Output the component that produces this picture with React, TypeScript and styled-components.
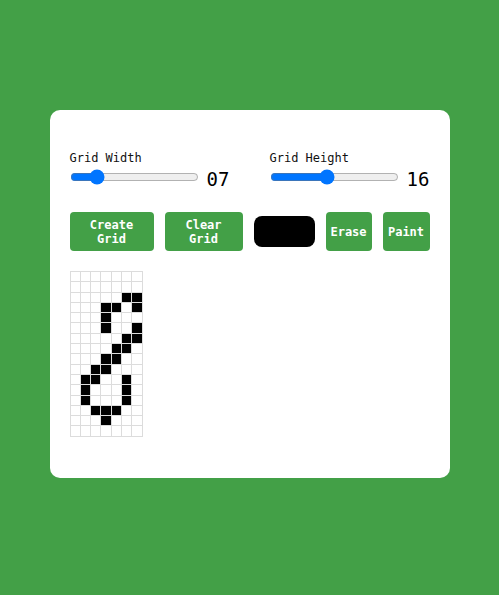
import React from 'react';
import styled, { createGlobalStyle } from 'styled-components';

const GREEN = '#43a047';
const MONO = '"DejaVu Sans Mono", "Liberation Mono", monospace';

const painted: number[][] = [
  [],
  [],
  [5, 6],
  [3, 4, 6],
  [3],
  [3, 6],
  [5, 6],
  [4, 5],
  [3, 4],
  [2, 3],
  [1, 2, 5],
  [1, 5],
  [1, 5],
  [2, 3, 4],
  [3],
  [],
];

const App = () => {
  return (
    <Page>
      <GlobalStyle />
      <Card>
        <Controls>
          <SliderGroup>
            <Label>Grid Width</Label>
            <SliderRow>
              <Slider type="range" min={1} max={35} defaultValue={7} readOnly />
              <Value>07</Value>
            </SliderRow>
          </SliderGroup>
          <SliderGroup>
            <Label>Grid Height</Label>
            <SliderRow>
              <Slider type="range" min={1} max={35} defaultValue={16} readOnly />
              <Value>16</Value>
            </SliderRow>
          </SliderGroup>
        </Controls>
        <Toolbar>
          <Button $width={84}>Create Grid</Button>
          <Button $width={78}>Clear Grid</Button>
          <ColorSwatch />
          <Button $width={46}>Erase</Button>
          <Button $width={47}>Paint</Button>
        </Toolbar>
        <PixelGrid>
          {painted.map((row, r) =>
            Array.from({ length: 7 }, (_, c) => (
              <Cell key={`${r}-${c}`} $filled={row.includes(c)} />
            ))
          )}
        </PixelGrid>
      </Card>
    </Page>
  );
};

export default App;

const GlobalStyle = createGlobalStyle`
  body {
    margin: 0;
    background: ${GREEN};
    font-family: ${MONO};
  }
`;

const Page = styled.main`
  display: flex;
  justify-content: center;
  padding-top: 110px;
`;

const Card = styled.section`
  width: 400px;
  box-sizing: border-box;
  background: #fff;
  border-radius: 10px;
  padding: 40px 20px 41px;
  display: flex;
  flex-direction: column;
`;

const Controls = styled.div`
  display: flex;
  gap: 40px;
`;

const SliderGroup = styled.div`
  display: flex;
  flex-direction: column;
  width: 160px;
`;

const Label = styled.label`
  font-size: 12px;
  line-height: 14px;
  color: #111;
  margin-top: 1px;
`;

const SliderRow = styled.div`
  display: flex;
  align-items: center;
  height: 24px;
`;

const Slider = styled.input`
  width: 129px;
  margin: 0;
`;

const Value = styled.span`
  font-size: 19px;
  line-height: 22px;
  margin-left: 8px;
  margin-top: 3px;
  color: #000;
`;

const Toolbar = styled.div`
  display: flex;
  align-items: center;
  justify-content: space-between;
  margin-top: 23px;
  height: 39px;
`;

const Button = styled.button<{ $width: number }>`
  width: ${(p) => p.$width}px;
  height: 39px;
  padding: 0 4px;
  border: none;
  border-radius: 4px;
  background: ${GREEN};
  color: #fff;
  font-family: ${MONO};
  font-weight: bold;
  font-size: 12px;
  line-height: 14px;
`;

const ColorSwatch = styled.div`
  width: 61px;
  height: 31px;
  border-radius: 8px;
  background: #000;
`;

const PixelGrid = styled.div`
  display: grid;
  grid-template-columns: repeat(7, 9.3px);
  grid-auto-rows: 9.3px;
  gap: 1px;
  padding: 1px;
  background: #dcdcdc;
  align-self: flex-start;
  margin-top: 20px;
`;

const Cell = styled.div<{ $filled: boolean }>`
  background: ${(p) => (p.$filled ? '#000' : '#fff')};
`;
